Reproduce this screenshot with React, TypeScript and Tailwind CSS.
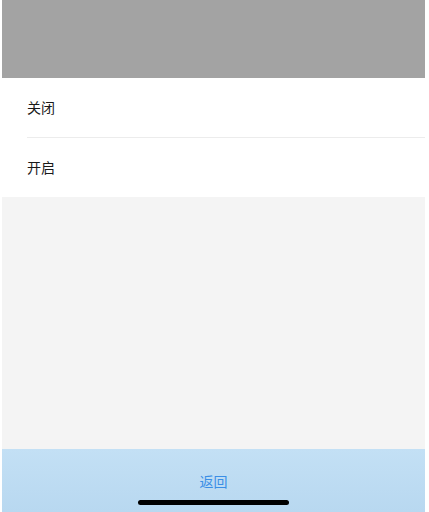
export default function App() {
  const options = ['关闭', '开启']

  return (
    <div
      className="flex h-[512px] w-full flex-col bg-white pl-[2px] pr-[4px]"
      style={{ fontFamily: '"Noto Sans CJK SC", "Liberation Sans", sans-serif' }}
    >
      <div className="h-[78px] shrink-0 bg-[#a3a3a3]" />

      <div className="bg-white">
        {options.map((label, i) => (
          <div key={label} className="pl-[25px]">
            <div
              className={`flex items-center text-[14px] text-[#1a1a1a] ${
                i < options.length - 1 ? 'h-[60px] border-b border-[#ececec]' : 'h-[59px]'
              }`}
            >
              {label}
            </div>
          </div>
        ))}
      </div>

      <div className="flex-1 bg-[#f4f4f4]" />

      <div className="relative h-[63px] shrink-0 bg-gradient-to-b from-[#c3e0f5] to-[#b8d8f0]">
        <div className="flex h-[63px] items-start justify-center pt-[22px] text-[14px] text-[#3a8ee6]">
          返回
        </div>
        <div className="absolute left-[136px] top-[51px] h-[5px] w-[151px] rounded-full bg-black" />
      </div>
    </div>
  )
}
